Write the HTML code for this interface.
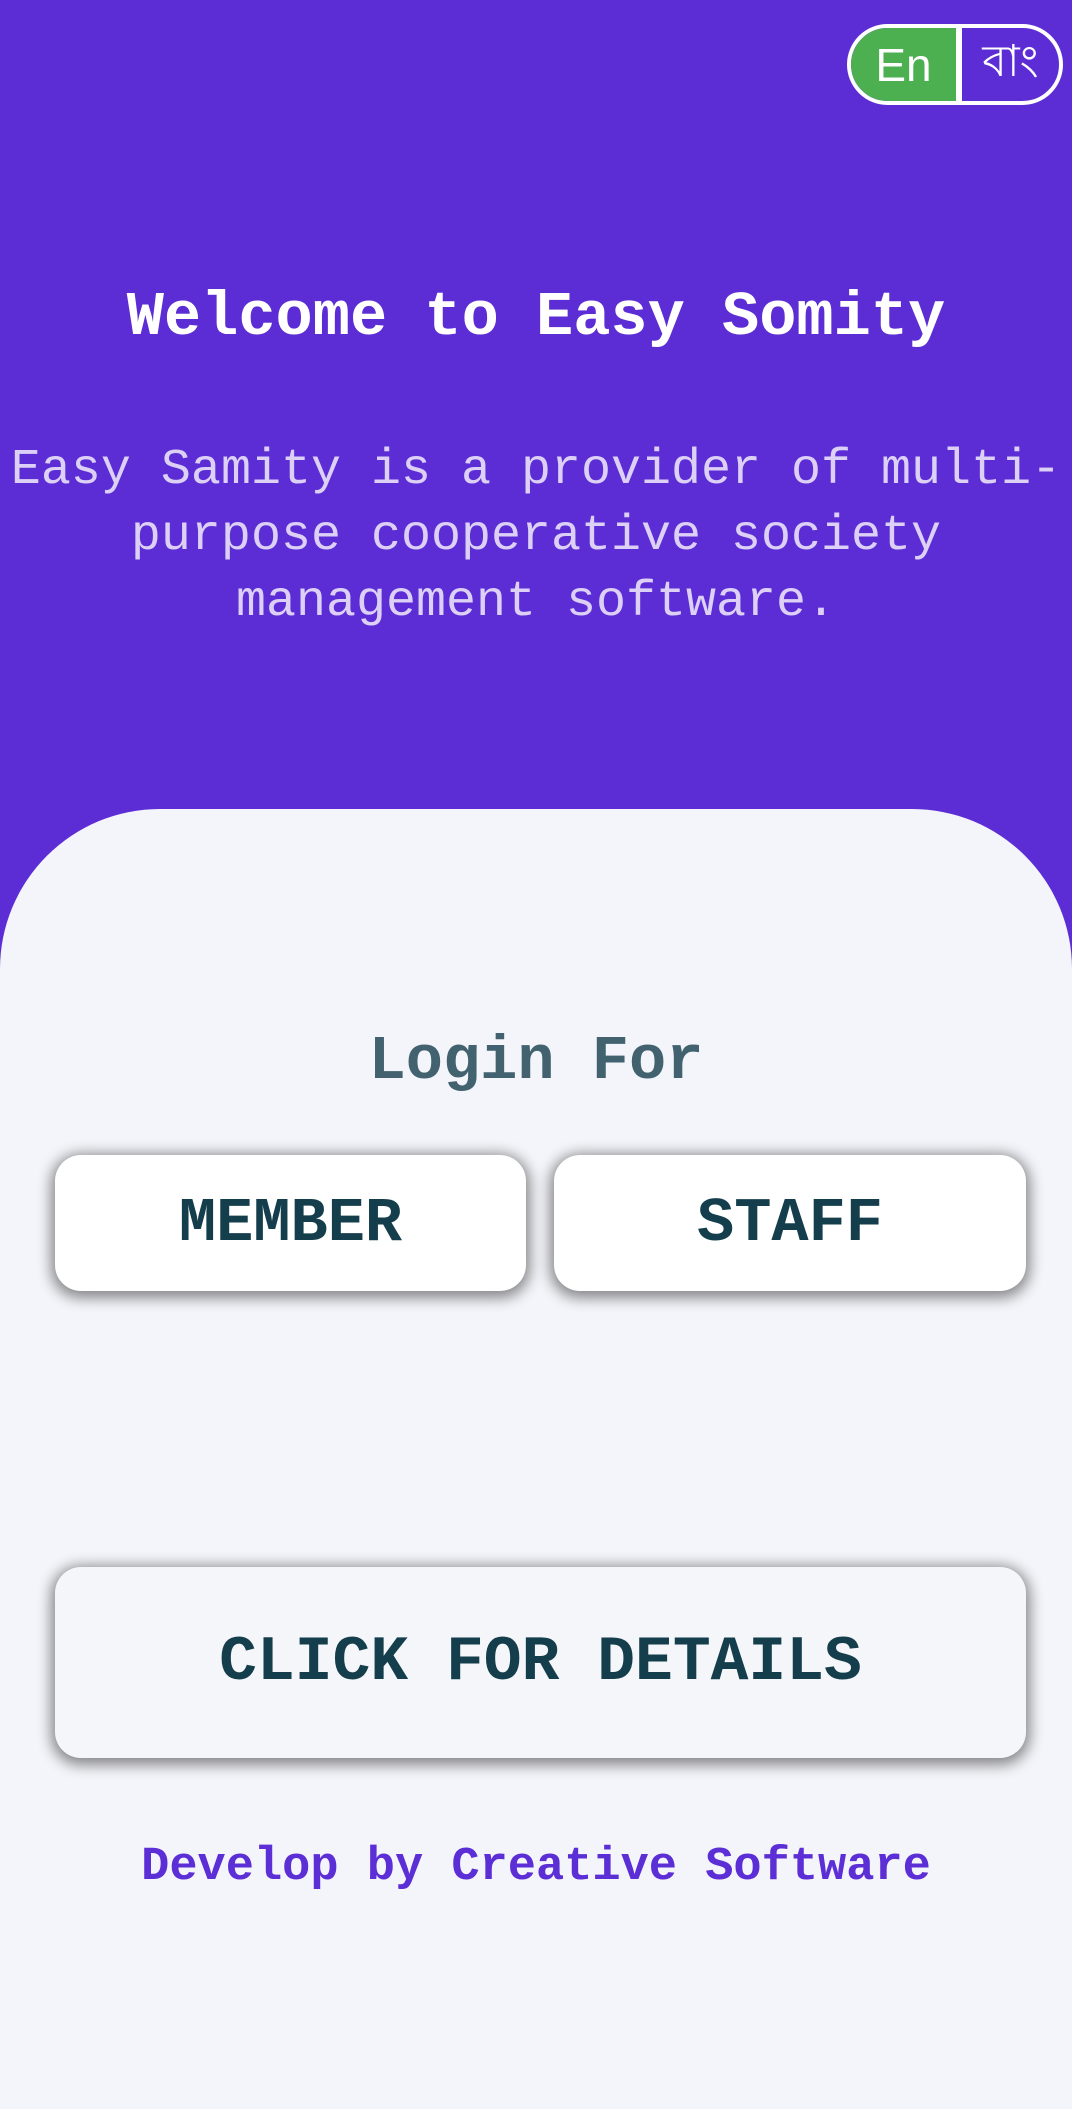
<!DOCTYPE html>
<html><head><meta charset="utf-8"><style>
html,body{margin:0;padding:0;}
body{width:1072px;height:2023px;background:#5c2dd5;position:relative;overflow:hidden;font-family:"Liberation Mono",monospace;}
.toggle{position:absolute;left:847px;top:24px;width:216px;height:81px;border:4px solid #fff;border-radius:44px;box-sizing:border-box;overflow:hidden;display:flex;}
.toggle .en{width:105px;background:#4caf50;color:#fff;font-family:"Liberation Sans",sans-serif;font-size:46px;display:flex;align-items:center;justify-content:center;border-right:6px solid #fff;}
.toggle .bn{flex:1;color:#fff;font-family:"Liberation Sans","Noto Sans CJK SC",sans-serif;font-size:44px;display:flex;align-items:center;justify-content:center;}
.title{position:absolute;top:278px;left:0;width:1072px;text-align:center;color:#fff;font-weight:bold;font-size:62px;line-height:80px;}
.sub{position:absolute;top:438px;left:0;width:1072px;text-align:center;color:#ddd0f6;font-size:50px;line-height:66px;}
.panel{position:absolute;top:809px;left:0;width:1072px;height:1300px;background:#f4f5fa;border-radius:160px 160px 0 0;}
.login{position:absolute;top:1022px;left:0;width:1072px;text-align:center;color:#41626e;font-weight:bold;font-size:62px;line-height:80px;}
.btn{position:absolute;background:#fff;border-radius:26px;box-shadow:0 3px 14px 4px rgba(0,0,0,0.45);color:#143e4c;font-weight:bold;font-size:62px;display:flex;align-items:center;justify-content:center;}
.foot{position:absolute;top:1840px;left:0;width:1072px;text-align:center;color:#5b2ed6;font-weight:bold;font-size:47px;line-height:56px;}
</style></head><body>
<div class="toggle"><div class="en">En</div><div class="bn">বাং</div></div>
<div class="title">Welcome to Easy Somity</div>
<div class="sub">Easy Samity is a provider of multi-<br>purpose cooperative society<br>management software.</div>
<div class="panel"></div>
<div class="login">Login For</div>
<div class="btn" style="left:55px;top:1155px;width:471px;height:136px;">MEMBER</div>
<div class="btn" style="left:554px;top:1155px;width:472px;height:136px;">STAFF</div>
<div class="btn" style="left:55px;top:1567px;width:971px;height:191px;background:#f5f6fa;font-size:63px;">CLICK FOR DETAILS</div>
<div class="foot">Develop by Creative Software</div>
</body></html>
